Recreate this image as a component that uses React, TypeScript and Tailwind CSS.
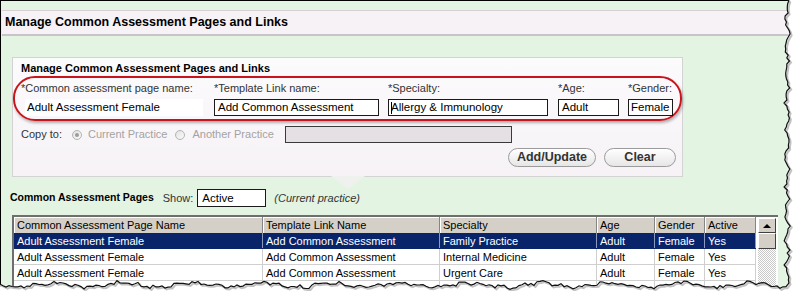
import React from 'react';

const rows = [
  { page: 'Adult Assessment Female', link: 'Add Common Assessment', specialty: 'Family Practice', age: 'Adult', gender: 'Female', active: 'Yes' },
  { page: 'Adult Assessment Female', link: 'Add Common Assessment', specialty: 'Internal Medicine', age: 'Adult', gender: 'Female', active: 'Yes' },
  { page: 'Adult Assessment Female', link: 'Add Common Assessment', specialty: 'Urgent Care', age: 'Adult', gender: 'Female', active: 'Yes' },
  { page: '', link: '', specialty: '', age: '', gender: '', active: '' },
];

const headers = ['Common Assessment Page Name', 'Template Link Name', 'Specialty', 'Age', 'Gender', 'Active'];

// simple seeded noise so the torn edge is the same every render
const noise = (n: number, seed: number) => {
  let s = seed;
  const out: number[] = [];
  for (let i = 0; i < n; i++) {
    s = (s * 9301 + 49297) % 233280;
    out.push(s / 233280);
  }
  return out;
};

const TornEdge: React.FC = () => {
  const rnd = noise(500, 11);
  let k = 0;
  const pts: string[] = [];
  for (let y = -2; y <= 283; y += 3) {
    const x = 787 + Math.sin(y * 0.23) * 1.6 + (rnd[k++] - 0.5) * 3.4;
    pts.push(`${x.toFixed(1)},${y}`);
  }
  for (let x = 786; x >= -3; x -= 3) {
    const y = 285 + Math.sin(x * 0.09) * 2.2 + Math.sin(x * 0.31) * 0.8 + (rnd[k++] - 0.5) * 3.2;
    pts.push(`${x},${y.toFixed(1)}`);
  }
  const line = 'M ' + pts.join(' L ');
  const fill = `M 800,-3 L ${pts.join(' L ')} L -3,296 L 800,296 Z`;
  return (
    <svg className="pointer-events-none absolute inset-0" width="795" height="291" viewBox="0 0 795 291">
      <path d={fill} fill="#ffffff" />
      <path d={line} fill="none" stroke="#9a9a9a" strokeWidth="2" transform="translate(1.5,1.5)" opacity="0.6" />
      <path d={line} fill="none" stroke="#111" strokeWidth="1.2" />
    </svg>
  );
};

const Radio: React.FC<{ checked?: boolean }> = ({ checked }) => (
  <span className="flex h-[10px] w-[10px] items-center justify-center rounded-full border border-[#b4b4b4] bg-gradient-to-br from-[#e2e2e2] to-[#fafafa]">
    {checked && <span className="h-[4px] w-[4px] rounded-full bg-[#9c9c9c]" />}
  </span>
);

const Button: React.FC<{ label: string; className: string }> = ({ label, className }) => (
  <div className={`flex h-[19px] items-center justify-center rounded-full border border-[#9b9b9b] bg-gradient-to-b from-[#ffffff] to-[#e6e6e6] text-[12.5px] font-bold text-[#333] ${className}`}>
    {label}
  </div>
);

const colWidths = ['w-[249px]', 'w-[177px]', 'w-[157px]', 'w-[58px]', 'w-[50px]', 'w-[51px]'];

export default function App() {
  return (
    <div className="relative h-[291px] w-[795px] overflow-hidden bg-white font-['Liberation_Sans',Arial,sans-serif] text-[#222]">
      <div className="h-[300px] w-[792px] border-l border-t border-black bg-[#e4f4e2]">
        {/* page title bar */}
        <div className="ml-px mt-[9px] flex h-[26px] items-center border-b-2 border-t border-b-[#cbc3cb] border-t-[#d6cfd6] bg-[#f6f2f6] pl-[3px] text-[12.5px] font-bold text-black">
          Manage Common Assessment Pages and Links
        </div>

        {/* edit panel */}
        <div className="relative ml-[11px] mt-[21px] w-[671px] border border-[#d3d3d3] bg-gradient-to-b from-[#fcfbfc] to-[#f6f2f6]">
          <div className="pl-[8px] pt-[3px] text-[11px] font-bold leading-[14px] text-black">
            Manage Common Assessment Pages and Links
          </div>

          <div className="mt-px h-[45px] rounded-[22px] border-2 border-[#c8151b] shadow-[1px_2px_3px_rgba(0,0,0,0.3)]">
            <div className="grid grid-cols-[199px_174px_170px_70px_1fr] pt-[3px] text-[11px] leading-[14px] text-[#333]">
              <div className="pl-[6px]">*Common assessment page name:</div>
              <div>*Template Link name:</div>
              <div>*Specialty:</div>
              <div>*Age:</div>
              <div>*Gender:</div>
            </div>
            <div className="mt-[4px] grid grid-cols-[199px_174px_170px_70px_1fr] text-[11.5px] leading-[15px] text-black">
              <div className="ml-[10px] h-[17px] w-[178px] bg-white pl-[2px] pt-px">Adult Assessment Female</div>
              <div className="h-[17px] w-[165px] border border-[#1a1a1a] bg-white pl-[3px]">Add Common Assessment</div>
              <div className="flex h-[17px] w-[160px] items-center border border-[#1a1a1a] bg-white pl-[2px]">
                <span className="mr-[-1px] h-[12px] w-px bg-black" />
                Allergy &amp; Immunology
              </div>
              <div className="h-[17px] w-[61px] border border-[#1a1a1a] bg-white pl-[3px]">Adult</div>
              <div className="h-[17px] w-[45px] border border-[#1a1a1a] bg-white pl-[2px]">Female</div>
            </div>
          </div>

          <div className="mt-[5px] flex h-[17px] items-center pl-[8px] text-[11px]">
            <span className="text-[#333]">Copy to:</span>
            <span className="ml-[10px]"><Radio checked /></span>
            <span className="ml-[6px] text-[#a3a3a3]">Current Practice</span>
            <span className="ml-[8px]"><Radio /></span>
            <span className="ml-[7px] text-[#a3a3a3]">Another Practice</span>
            <div className="ml-[11px] h-[17px] w-[227px] border border-[#3a3a3a] bg-[#e4e0e4]" />
          </div>

          <div className="mt-[5px] flex justify-end gap-[8px] pb-[9px] pr-[6px]">
            <Button label="Add/Update" className="w-[88px]" />
            <Button label="Clear" className="w-[72px]" />
          </div>

          <div className="absolute left-[318px] top-full h-0 w-0 border-x-[17px] border-t-[13px] border-x-transparent border-t-[#eef1ee]" />
        </div>

        {/* list header */}
        <div className="ml-[9px] mt-[12px] flex h-[18px] items-center text-[11px]">
          <span className="text-[10.5px] font-bold text-black">Common Assessment Pages</span>
          <span className="ml-[9px] text-[#333]">Show:</span>
          <div className="ml-[4px] h-[18px] w-[69px] border border-[#1a1a1a] bg-white pl-[4px] text-[11.5px] leading-[16px] text-black">Active</div>
          <span className="ml-[8px] italic text-[#333]">(Current practice)</span>
        </div>

        {/* grid */}
        <div className="ml-[11px] mt-[8px] flex w-[766px] border-l-2 border-t-2 border-[#6e6e6e] bg-white">
          <div className="w-[742px] text-[11px] leading-[16px]">
            <div className="flex h-[16px] bg-[#d4d0c8] text-black">
              {headers.map((h, i) => (
                <div key={h} className={`${colWidths[i]} border-r border-[#858585] pl-[3px] shadow-[inset_1px_1px_0_#ffffff]`}>
                  {h}
                </div>
              ))}
            </div>
            {rows.map((r, ri) => {
              const cells = [r.page, r.link, r.specialty, r.age, r.gender, r.active];
              const selected = ri === 0;
              return (
                <div
                  key={ri}
                  className={`flex h-[16px] border-b ${selected ? 'border-[#0a246a] bg-[#0a246a] text-white' : 'border-[#cfcfcf] bg-white text-black'}`}
                >
                  {cells.map((c, ci) => (
                    <div key={ci} className={`${colWidths[ci]} border-r ${selected ? 'border-[#8d9ac0]' : 'border-[#cfcfcf]'} pl-[3px]`}>
                      {c}
                    </div>
                  ))}
                </div>
              );
            })}
          </div>
          <div className="w-[22px] pl-[2px] pr-[2px] pt-px">
            <div className="flex h-[15px] w-[18px] items-center justify-center border border-b-[#404040] border-l-[#ffffff] border-r-[#404040] border-t-[#ffffff] bg-[#d4d0c8]">
              <span className="h-0 w-0 border-x-[4px] border-b-[4px] border-x-transparent border-b-black" />
            </div>
            <div className="h-[16px] w-[18px] border border-b-[#404040] border-l-[#ffffff] border-r-[#404040] border-t-[#ffffff] bg-[#d4d0c8]" />
            <div className="h-[60px] w-[18px] bg-[repeating-conic-gradient(#c8c8c8_0_25%,#ffffff_0_50%)] bg-[length:2px_2px]" />
          </div>
        </div>
      </div>
      <TornEdge />
    </div>
  );
}
